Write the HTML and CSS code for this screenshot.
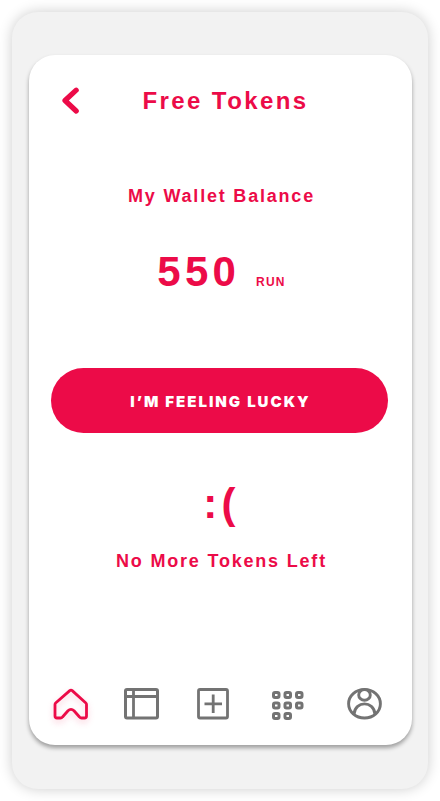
FILE: index.html
```html
<!DOCTYPE html>
<html lang="en">
<head>
<meta charset="utf-8">
<meta name="viewport" content="width=device-width, initial-scale=1">
<title>Free Tokens</title>
<link rel="stylesheet" href="styles.css">
</head>
<body>
<div class="device">
  <div class="screen">
    <header class="header">
      <button class="back" type="button" aria-label="Back">
        <svg width="18" height="28" viewBox="0 0 18 28" fill="none" stroke="currentColor" stroke-width="5.200" stroke-linecap="round" stroke-linejoin="round"><path d="M15.200 3.200 4 13.500 15.200 24"/></svg>
      </button>
      <h1 class="title">Free Tokens</h1>
    </header>
    <main class="content">
      <h2 class="label">My Wallet Balance</h2>
      <p class="balance"><span class="big">550</span><span class="unit">RUN</span></p>
      <button class="lucky" type="button">I’M FEELING LUCKY</button>
      <p class="face big">:(</p>
      <p class="label">No More Tokens Left</p>
    </main>
    <nav class="nav" aria-label="Main">
      <a class="tab active" href="#home" aria-label="Home">
        <svg width="36" height="34" viewBox="0 0 36 34" fill="none" stroke="currentColor" stroke-width="2.800" stroke-linejoin="round"><path d="M16.800 3.600Q18 2.600 19.200 3.600L32.600 15.800Q33.500 16.600 33.500 17.500V29Q33.500 31 31.500 31H28.500Q27.300 31 26.500 30L21 23.800Q18 20.800 15 23.800L9.500 30Q8.700 31 7.500 31H4Q2 31 2 29V17.500Q2 16.600 2.900 15.800Z"/></svg>
      </a>
      <a class="tab" href="#feed" aria-label="Feed">
        <svg width="36" height="34" viewBox="0 0 36 34" fill="none" stroke="currentColor" stroke-width="3"><rect x="2.500" y="2.500" width="32" height="28.500" rx="1.500"/><path d="M2.500 9.500h32M10.500 2.500v28" stroke-width="2.800"/></svg>
      </a>
      <a class="tab" href="#add" aria-label="Add">
        <svg width="36" height="34" viewBox="0 0 36 34" fill="none" stroke="currentColor" stroke-width="2.800"><rect x="3.500" y="2.500" width="29" height="28.500" rx="1.500"/><path d="M9.500 16.800h17.500M18.200 7.500v18.500"/></svg>
      </a>
      <a class="tab" href="#apps" aria-label="Apps">
        <svg width="36" height="34" viewBox="0 0 36 34" fill="none" stroke="currentColor" stroke-width="3"><rect x="3.500" y="5.500" width="5.500" height="5" rx="1.500"/><rect x="15" y="5.500" width="5.500" height="5" rx="1.500"/><rect x="26.500" y="5.500" width="5.500" height="5" rx="1.500"/><rect x="3.500" y="16" width="5.500" height="5" rx="1.500"/><rect x="15" y="16" width="5.500" height="5" rx="1.500"/><rect x="26.500" y="16" width="5.500" height="5" rx="1.500"/><rect x="3.500" y="26.500" width="5.500" height="5" rx="1.500"/><rect x="15" y="26.500" width="5.500" height="5" rx="1.500"/></svg>
      </a>
      <a class="tab" href="#profile" aria-label="Profile">
        <svg width="36" height="34" viewBox="0 0 36 34" fill="none" stroke="currentColor" stroke-width="2.900"><ellipse cx="17.500" cy="16.700" rx="15.900" ry="14.300"/><ellipse cx="17.500" cy="7.900" rx="5.800" ry="5.300"/><path d="M7 27C8.300 13.500 26.700 13.500 28 27"/></svg>
      </a>
    </nav>
  </div>
</div>
</body>
</html>
```
FILE: styles.css
```css
* { box-sizing: border-box; }

body {
  margin: 0;
  min-height: 100vh;
  padding: 12px;
  display: flex;
  background: #fff;
  color: #ec0b48;
  font-family: "Liberation Sans", Arial, sans-serif;
  font-weight: 700;
}

h1, h2, p { margin: 0; font-weight: inherit; }

button {
  border: 0;
  padding: 0;
  cursor: pointer;
}

svg { display: block; }

.device {
  flex: 1;
  display: flex;
  padding: 43px 16px 44px 17px;
  border-radius: 26px;
  background: #f2f2f2;
  box-shadow: 0 0 14px rgba(0, 0, 0, 0.2);
}

.screen {
  flex: 1;
  display: flex;
  flex-direction: column;
  border-radius: 26px;
  background: #fff;
  box-shadow: 0 3px 4px rgba(0, 0, 0, 0.35);
}

.header {
  display: grid;
  grid-template-columns: 18px 1fr;
  align-items: center;
  padding: 32px 40px 0 32px;
}

.back {
  background: none;
  color: inherit;
}

.title {
  font-size: 24px;
  line-height: 28px;
  letter-spacing: 0.1em;
  text-align: center;
}

.content {
  flex: 1;
  display: flex;
  flex-direction: column;
  padding: 70px 24px 0 22px;
  text-align: center;
}

.label,
.balance,
.face { padding-left: 4px; }

.label {
  font-size: 18px;
  line-height: 22px;
  letter-spacing: 0.1em;
}

.balance {
  display: flex;
  justify-content: center;
  align-items: baseline;
  gap: 16px;
  margin-top: 41px;
}

.big {
  font-size: 42px;
  line-height: 48px;
  letter-spacing: 0.1em;
}

.unit {
  font-size: 12px;
  letter-spacing: 0.1em;
}

.lucky {
  height: 65px;
  margin: 72px 0 47px;
  padding: 2px 0 0 2px;
  border-radius: 33px;
  background: #ec0b48;
  color: #fff;
  font-family: "Arial Black", Inter, sans-serif;
  font-size: 15px;
  font-weight: 900;
  letter-spacing: 2px;
}

.face { margin-bottom: 22px; }

.nav {
  display: grid;
  grid-template-columns: 70fr 72fr 75fr 77fr 36px;
  padding: 0 29px 24px 24px;
}

.tab { color: #737373; }

.active {
  color: #ec0b48;
  filter: drop-shadow(0 3px 3px rgba(236, 11, 72, 0.2));
}
```
